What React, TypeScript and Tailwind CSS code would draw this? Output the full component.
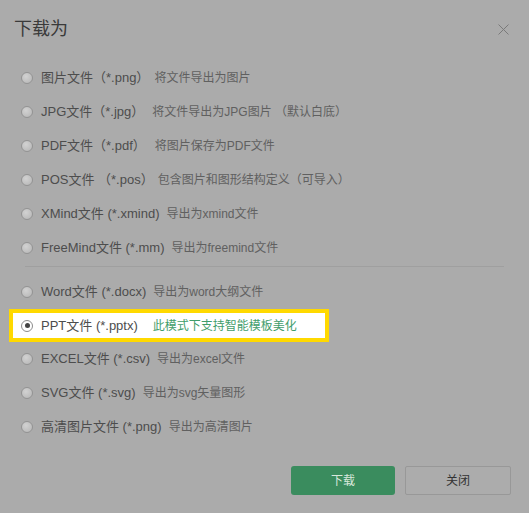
import React from 'react';

const FONT = { fontFamily: '"Liberation Sans", Arial, "Noto Sans CJK SC", sans-serif' };

type Option = { label: string; desc: string; gap?: string };

const groupA: Option[] = [
  { label: '图片文件（*.png）', desc: '将文件导出为图片', gap: 'ml-[5px]' },
  { label: 'JPG文件（*.jpg）', desc: '将文件导出为JPG图片 （默认白底）', gap: 'ml-[8px]' },
  { label: 'PDF文件（*.pdf）', desc: '将图片保存为PDF文件', gap: 'ml-[9px]' },
  { label: 'POS文件 （*.pos）', desc: '包含图片和图形结构定义（可导入）', gap: 'ml-[4px]' },
  { label: 'XMind文件 (*.xmind)', desc: '导出为xmind文件' },
  { label: 'FreeMind文件 (*.mm)', desc: '导出为freemind文件' },
];

const groupB: Option[] = [
  { label: 'Word文件 (*.docx)', desc: '导出为word大纲文件' },
  { label: 'PPT文件 (*.pptx)', desc: '此模式下支持智能模板美化' },
  { label: 'EXCEL文件 (*.csv)', desc: '导出为excel文件' },
  { label: 'SVG文件 (*.svg)', desc: '导出为svg矢量图形' },
  { label: '高清图片文件 (*.png)', desc: '导出为高清图片' },
];

function Radio({ checked }: { checked?: boolean }) {
  return checked ? (
    <span className="flex h-[12px] w-[12px] shrink-0 items-center justify-center rounded-full border border-[#8c8c8c] bg-white">
      <span className="h-[5px] w-[5px] rounded-full bg-[#444]" />
    </span>
  ) : (
    <span className="h-[12px] w-[12px] shrink-0 rounded-full border border-[#939393] bg-[radial-gradient(circle_at_40%_35%,#d2d2d2,#b4b4b4)]" />
  );
}

function Row({ opt }: { opt: Option }) {
  return (
    <div className="flex h-[34px] items-center pl-[21px]">
      <Radio />
      <span className="ml-[8px] text-[13px] text-[#4d4d4d]">{opt.label}</span>
      <span className={`${opt.gap ?? 'ml-[7px]'} text-[12px] text-[#606060]`}>{opt.desc}</span>
    </div>
  );
}

export default function App() {
  return (
    <div className="flex h-[513px] w-[529px] flex-col bg-[#ababab]" style={FONT}>
      <div className="flex h-[61px] items-start justify-between pl-[14px] pr-[20px] pt-[16px]">
        <span className="text-[18px] text-[#3a3a3a]">下载为</span>
        <svg width="11" height="11" viewBox="0 0 11 11" className="mt-[8px]">
          <path d="M0.5 0.5 L10.5 10.5 M10.5 0.5 L0.5 10.5" stroke="#7a7a7a" strokeWidth="1" fill="none" />
        </svg>
      </div>

      <div className="flex flex-col">
        {groupA.map((o) => (
          <Row key={o.label} opt={o} />
        ))}
      </div>

      <div className="mx-[25px] mb-[8px] mt-[1px] h-px bg-[#9f9f9f]" />

      <div className="flex flex-col">
        <Row opt={groupB[0]} />
        <div className="ml-[9px] flex h-[33px] w-[320px] items-center border-[4px] border-[#ffd900] bg-white pl-[8px]">
          <Radio checked />
          <span className="ml-[8px] text-[13px] text-[#4d4d4d]">{groupB[1].label}</span>
          <span className="ml-[15px] text-[12px] text-[#3f9d6b]">{groupB[1].desc}</span>
        </div>
        {groupB.slice(2).map((o) => (
          <Row key={o.label} opt={o} />
        ))}
      </div>

      <div className="mt-auto flex justify-end gap-[10px] pb-[18px] pr-[18px]">
        <button className="flex h-[29px] w-[104px] items-center justify-center rounded-[3px] bg-[#3a8c5e] text-[12px] text-[#d8e8dc]">
          下载
        </button>
        <button className="flex h-[29px] w-[106px] items-center justify-center rounded-[2px] border border-[#989898] bg-[#acacac] text-[12px] text-[#333]">
          关闭
        </button>
      </div>
    </div>
  );
}
